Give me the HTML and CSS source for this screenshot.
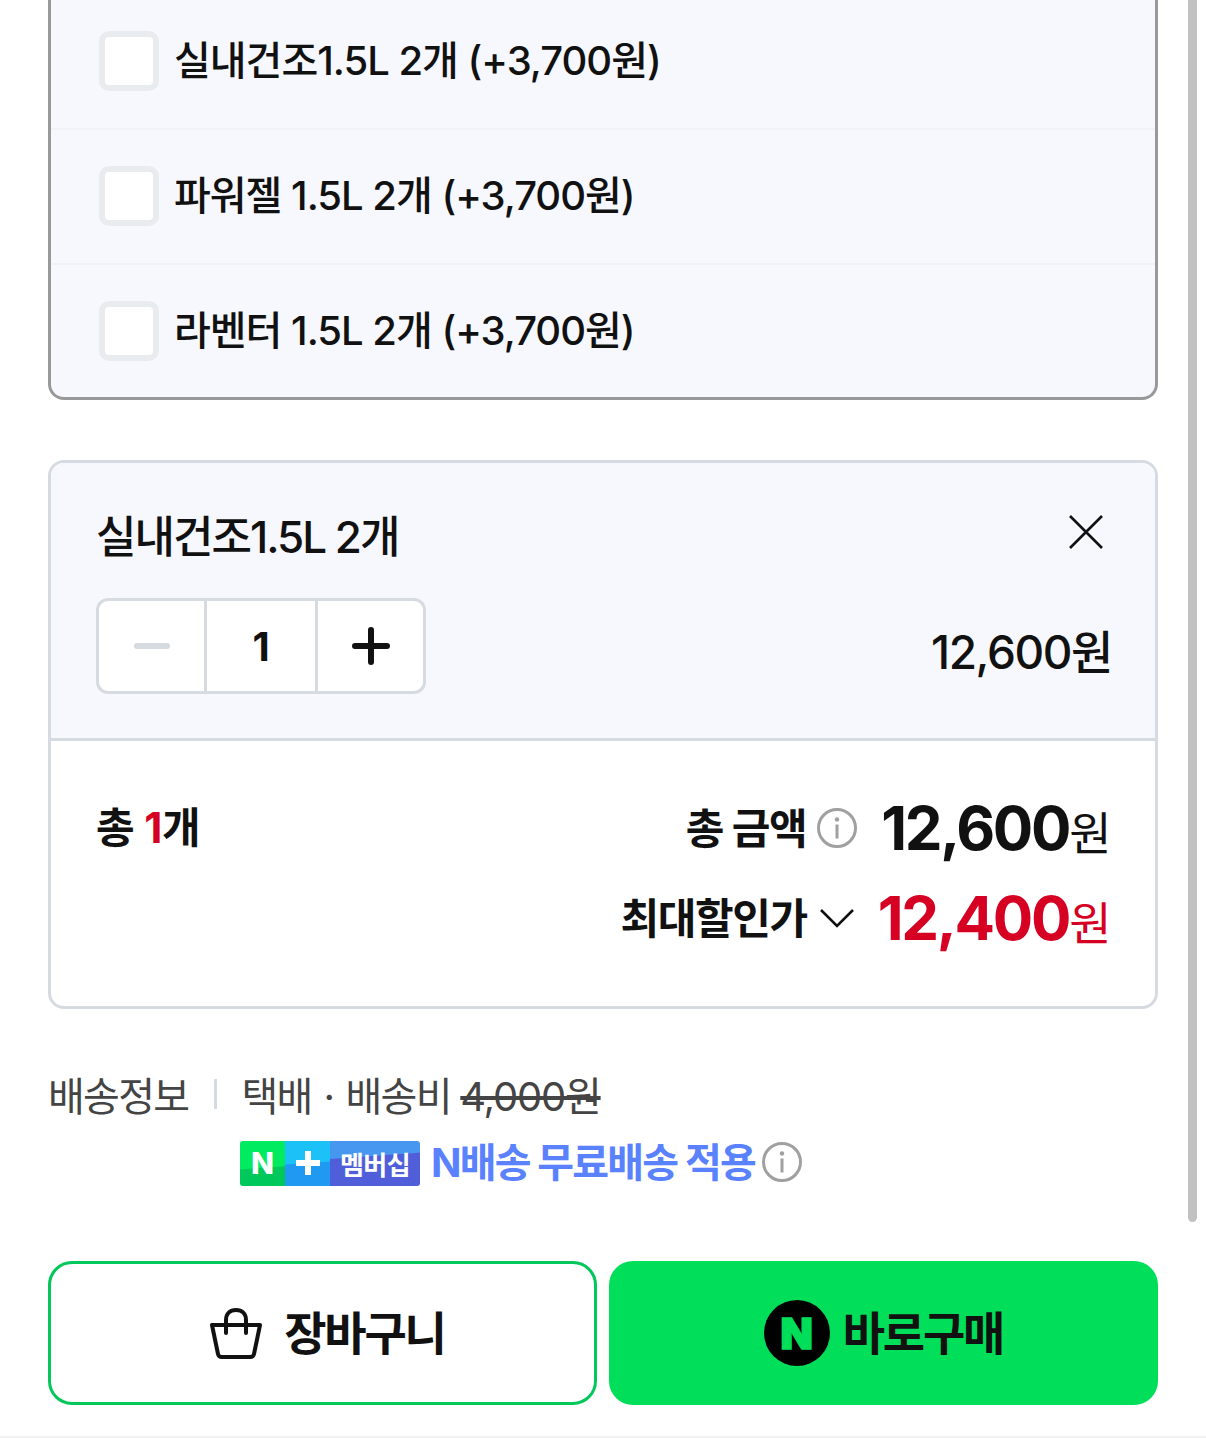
FILE: index.html
```html
<!DOCTYPE html>
<html lang="ko">
<head>
<meta charset="UTF-8">
<title>구매 옵션</title>
<link rel="stylesheet" href="styles.css">
</head>
<body>

<div class="scrollbar"></div>

<div class="options">
  <label class="option first">
    <span class="check"></span>
    <span class="option-name">실내건조1.5L 2개 (+3,700원)</span>
  </label>
  <label class="option">
    <span class="check"></span>
    <span class="option-name">파워젤 1.5L 2개 (+3,700원)</span>
  </label>
  <label class="option last">
    <span class="check"></span>
    <span class="option-name">라벤터 1.5L 2개 (+3,700원)</span>
  </label>
</div>

<div class="selected">
  <div class="selected-item">
    <div class="item-top">
      <div class="item-name">실내건조1.5L 2개</div>
      <svg class="close" width="36" height="36" viewBox="0 0 36 36" fill="none" stroke="#111" stroke-width="2.6"><path d="M2 2L34 34M34 2L2 34"/></svg>
    </div>
    <div class="item-bottom">
      <div class="stepper">
        <div class="step"><span class="minus"></span></div>
        <div class="step qty">1</div>
        <div class="step">
          <svg width="38" height="38" viewBox="0 0 38 38" fill="none" stroke="#111" stroke-width="6" stroke-linecap="round"><path d="M3 19H35M19 3V35"/></svg>
        </div>
      </div>
      <div class="item-price">12,600원</div>
    </div>
  </div>

  <div class="summary">
    <div class="count">총 <em>1</em>개</div>
    <div class="totals">
      <div class="total-row">
        <span class="total-label">총 금액</span>
        <svg class="info" width="40" height="40" viewBox="0 0 40 40"><circle cx="20" cy="20" r="18.5" fill="none" stroke="#a0a0a0" stroke-width="3"/><circle cx="20" cy="11.5" r="2.2" fill="#a0a0a0"/><rect x="18.5" y="16.5" width="3" height="14" fill="#a0a0a0"/></svg>
        <span class="total-price"><b>12,600</b>원</span>
      </div>
      <div class="total-row sale">
        <span class="total-label">최대할인가</span>
        <svg class="chevron" width="34" height="20" viewBox="0 0 34 20" fill="none" stroke="#111" stroke-width="2.6"><path d="M1 2L17 18L33 2"/></svg>
        <span class="total-price red"><b>12,400</b>원</span>
      </div>
    </div>
  </div>
</div>

<div class="delivery">
  <div class="delivery-line">
    <span class="delivery-title">배송정보</span>
    <span class="bar"></span>
    <span>택배<span class="dot">·</span>배송비 <s>4,000원</s></span>
  </div>
  <div class="delivery-free">
    <span class="badge">
      <span class="badge-n">N</span>
      <span class="badge-plus"><i></i></span>
      <span class="badge-text">멤버십</span>
    </span>
    <span class="free-text">N배송 무료배송 적용</span>
    <svg class="info" width="40" height="40" viewBox="0 0 40 40"><circle cx="20" cy="20" r="18.5" fill="none" stroke="#a0a0a0" stroke-width="3"/><circle cx="20" cy="11.5" r="2.2" fill="#a0a0a0"/><rect x="18.5" y="16.5" width="3" height="14" fill="#a0a0a0"/></svg>
  </div>
</div>

<div class="buttons">
  <button class="btn btn-cart">
    <svg width="52" height="51" viewBox="0 0 52 51" fill="none" stroke="#111" stroke-width="4" stroke-linejoin="round" stroke-linecap="round"><path d="M2 17H50L44 46Q43.500 49 40 49H12Q8.500 49 8 46Z"/><path d="M16 25V12C16 6 20 2 26 2S36 6 36 12V25"/></svg>
    <span class="btn-label">장바구니</span>
  </button>
  <button class="btn btn-buy">
    <span class="npay">N</span>
    <span class="btn-label">바로구매</span>
  </button>
</div>

<div class="page-end"></div>

</body>
</html>
```
FILE: styles.css
```css
* {
  box-sizing: border-box;
}

body {
  margin: 0;
  background: #fff;
  color: #111;
  font-family: "Inter", "Noto Sans CJK KR", sans-serif;
  height: 1438px;
  overflow: hidden;
  position: relative;
}

.scrollbar {
  position: absolute;
  top: -10px;
  left: 1188px;
  width: 9px;
  height: 1232px;
  background: #c1c1c1;
  border-radius: 5px;
}

/* 옵션 목록 */
.options {
  margin: 0 48px;
  width: 1110px;
  height: 400px;
  background: #f7f8fd;
  border: 3px solid #999;
  border-top: none;
  border-radius: 0 0 16px 16px;
}

.option {
  display: flex;
  align-items: center;
  height: 135px;
  padding: 0 0 1px 48px;
  border-bottom: 2px solid #f1f2f6;
}

.option.first {
  height: 130px;
  padding-bottom: 6px;
}

.option.last {
  height: 132px;
  padding-bottom: 0;
  border-bottom: none;
}

.check {
  width: 60px;
  height: 60px;
  background: #fff;
  border: 6px solid #e9ecef;
  border-radius: 10px;
  flex-shrink: 0;
}

.option-name {
  margin: 0 0 6px 15px;
  font-size: 40px;
  font-weight: 500;
  letter-spacing: -1px;
}

/* 선택한 상품 */
.selected {
  margin: 60px 48px 0;
  width: 1110px;
  height: 549px;
  border: 3px solid #d5dbe1;
  border-radius: 16px;
  overflow: hidden;
}

.selected-item {
  height: 278px;
  padding: 45px 45px 0;
  background: #f7f8fd;
  border-bottom: 3px solid #d5dbe1;
}

.item-top {
  display: flex;
  justify-content: space-between;
  height: 90px;
  padding-top: 2px;
}

.item-name {
  font-size: 44px;
  font-weight: 500;
  letter-spacing: -2px;
  line-height: 54px;
}

.close {
  margin-right: 6px;
  margin-top: 4px;
}

.item-bottom {
  display: flex;
  justify-content: space-between;
}

.stepper {
  display: flex;
  width: 330px;
  height: 96px;
  background: #fff;
  border: 3px solid #d5dbe1;
  border-radius: 12px;
}

.step {
  flex: 1;
  display: flex;
  align-items: center;
  justify-content: center;
}

.qty {
  flex: 0 0 114px;
  border-left: 3px solid #d5dbe1;
  border-right: 3px solid #d5dbe1;
  font-size: 40px;
  font-weight: 700;
}

.minus {
  width: 36px;
  height: 6px;
  background: #d5dbe1;
  border-radius: 3px;
}

.item-price {
  font-size: 46px;
  font-weight: 500;
  letter-spacing: -1.4px;
  line-height: 56px;
  margin: 26px -2px 0 0;
}

.summary {
  display: flex;
  justify-content: space-between;
  padding: 42px 45px 0;
}

.count {
  font-size: 42px;
  font-weight: 700;
  letter-spacing: -0.2px;
  line-height: 90px;
  height: 90px;
}

.count em {
  font-style: normal;
  color: #d60023;
}

.total-row {
  display: flex;
  align-items: center;
  justify-content: flex-end;
  height: 90px;
}

.total-label {
  margin-bottom: 6px;
  font-size: 42px;
  font-weight: 700;
  letter-spacing: -1.4px;
}

.info {
  margin-left: 11px;
  flex-shrink: 0;
}

.chevron {
  margin-left: 13px;
}

.total-price {
  margin-left: 24px;
  font-size: 46px;
  letter-spacing: -1.5px;
  color: #111;
}

.total-price b {
  font-size: 60px;
  font-weight: 700;
  letter-spacing: -2.3px;
}

.total-price.red {
  color: #d60023;
}

/* 배송 정보 */
.delivery {
  margin: 57px 48px 0;
  color: #444;
  font-size: 40px;
  letter-spacing: -1.7px;
}

.delivery-line {
  display: flex;
  align-items: center;
  height: 56px;
}

.bar {
  width: 3px;
  height: 30px;
  margin: 0 24px 0 26px;
  background: #d5dbe1;
}

.dot {
  margin: 0 12px;
}

.delivery-line s {
  letter-spacing: -1.2px;
}

.delivery-free {
  display: flex;
  align-items: center;
  margin: 18px 0 0 192px;
  height: 46px;
}

.badge {
  display: flex;
  width: 180px;
  height: 45px;
  border-radius: 3px;
  overflow: hidden;
  color: #fff;
}

.badge-n,
.badge-plus {
  width: 45px;
  display: flex;
  align-items: center;
  justify-content: center;
}

.badge-n {
  background: linear-gradient(176deg, #00eb5f 58%, #00c85b 60%);
  font-size: 30px;
  font-weight: 800;
  letter-spacing: 0;
}

.badge-plus {
  background: linear-gradient(176deg, #1cc2f7 48%, #1f99f2 50%);
}

.badge-plus i {
  display: block;
  width: 24px;
  height: 24px;
  background:
    linear-gradient(#fff, #fff) center / 24px 6px no-repeat,
    linear-gradient(#fff, #fff) center / 6px 24px no-repeat;
}

.badge-text {
  flex: 1;
  display: flex;
  align-items: center;
  justify-content: center;
  background: linear-gradient(176deg, #4796f0 34%, #505fd9 36%);
  font-size: 26px;
  font-weight: 700;
  letter-spacing: -0.6px;
}

.free-text {
  margin: 0 0 6px 11px;
  color: #5a82ff;
  font-weight: 700;
  letter-spacing: -1.8px;
}

.delivery-free .info {
  margin: 0 0 3px 7px;
}

/* 하단 버튼 */
.buttons {
  display: flex;
  gap: 12px;
  margin: 75px 48px 0;
}

.btn {
  flex: 0 0 549px;
  display: flex;
  align-items: center;
  justify-content: center;
  height: 144px;
  padding: 0;
  border-radius: 24px;
  font-family: inherit;
  font-size: 46px;
  font-weight: 700;
  letter-spacing: -2.2px;
  color: #111;
}

.btn-label {
  margin-bottom: 6px;
}

.btn-cart {
  gap: 22px;
  padding-left: 10px;
  background: #fff;
  border: 3px solid #03c75a;
}

.btn-buy {
  gap: 13px;
  background: #00de5a;
  border: none;
}

.npay {
  width: 66px;
  height: 66px;
  display: flex;
  align-items: center;
  justify-content: center;
  background: #000;
  border-radius: 50%;
  color: #00de5a;
  font-size: 42px;
  font-weight: 900;
  letter-spacing: 0;
  -webkit-text-stroke: 1.5px #00de5a;
}

.page-end {
  margin-top: 31px;
  height: 2px;
  background: #f2f2f2;
}
```
